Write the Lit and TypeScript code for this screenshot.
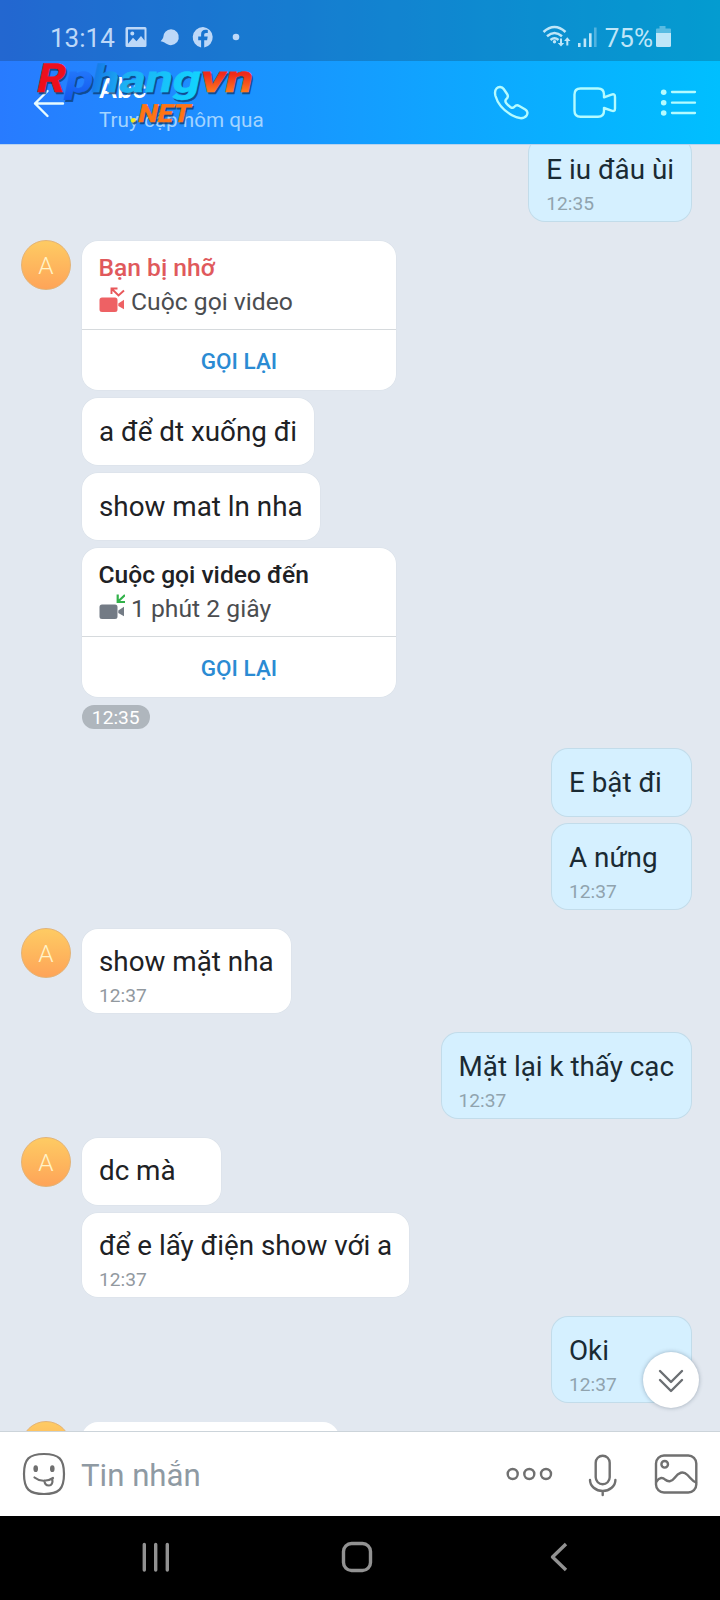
import { LitElement, html, svg, css, nothing } from "lit";
import { customElement, property } from "lit/decorators.js";

type Item =
  | { kind: "text"; text: string; time?: string }
  | { kind: "call"; missed: boolean; title: string; detail: string }
  | { kind: "stub" }
  | { kind: "stamp"; time: string };
interface Group {
  mine: boolean;
  items: Item[];
}

const GROUPS: Group[] = [
  { mine: true, items: [{ kind: "text", text: "E iu đâu ùi", time: "12:35" }] },
  {
    mine: false,
    items: [
      { kind: "call", missed: true, title: "Bạn bị nhỡ", detail: "Cuộc gọi video" },
      { kind: "text", text: "a để dt xuống đi" },
      { kind: "text", text: "show mat ln nha" },
      { kind: "call", missed: false, title: "Cuộc gọi video đến", detail: "1 phút 2 giây" },
      { kind: "stamp", time: "12:35" },
    ],
  },
  {
    mine: true,
    items: [
      { kind: "text", text: "E bật đi" },
      { kind: "text", text: "A nứng", time: "12:37" },
    ],
  },
  { mine: false, items: [{ kind: "text", text: "show mặt nha", time: "12:37" }] },
  { mine: true, items: [{ kind: "text", text: "Mặt lại k thấy cạc", time: "12:37" }] },
  {
    mine: false,
    items: [
      { kind: "text", text: "dc mà" },
      { kind: "text", text: "để e lấy điện show với a", time: "12:37" },
    ],
  },
  { mine: true, items: [{ kind: "text", text: "Oki", time: "12:37" }] },
  { mine: false, items: [{ kind: "stub" }] },
];

@customElement("status-bar")
class StatusBar extends LitElement {
  static styles = css`
    :host {
      display: flex;
      box-sizing: border-box;
      height: 61px;
      padding: 14px 48px 0 50px;
      background: rgba(20, 30, 40, 0.22);
      color: #c3e0fb;
      font: 26px/48px Roboto, sans-serif;
      justify-content: space-between;
    }
    .side { display: flex; height: 46px; }
    .left { color: #bdd8f8; }
    svg { display: block; fill: currentColor; }
    .icons { margin-left: 9px; }
    .right { color: #bfe6f8; }
    .pct { margin-left: 6.500px; margin-right: 2px; }
  `;
  render() {
    return html`
      <div class="side left">
        <span>13:14</span>
        <svg class="icons" width="120" height="46" viewBox="124 14 120 46">
          <path fill-rule="evenodd" d="M127 27h18a1.5 1.5 0 0 1 1.500 1.500v17a1.500 1.500 0 0 1-1.500 1.500h-18a1.500 1.500 0 0 1-1.500-1.500v-17a1.500 1.500 0 0 1 1.500-1.500zM128 29.500v14.200l5-6 3.500 3.600 4.500-5.300 3.500 4.500v-11zM132.300 31.400a2 2 0 1 1 0 4a2 2 0 1 1 0-4z"/>
          <path d="M171 29.300a7.900 7.900 0 1 1-3.500 15c-2-.9-4-2.500-6.800-3 .5-1.200 1.800-2.200 2.500-3.900a7.900 7.900 0 0 1 7.800-8.100z"/>
          <path d="M203 27a10.400 10.400 0 0 0-1.900 20.600v-7.400h-2.900v-3.600h2.900v-2.300c0-3 1.700-4.500 4.300-4.500 1.200 0 2 .1 2.400.2v2.900h-1.700c-1.500 0-1.900.8-1.900 1.900v1.800h3.500l-.6 3.600h-2.900v7.400a10.400 10.400 0 0 0-1.200-20.600z"/>
          <circle cx="236" cy="37" r="3.300"/>
        </svg>
      </div>
      <div class="side right">
        <svg width="56" height="46" viewBox="541 14 56 46">
          <g fill="none" stroke="currentColor" stroke-width="2.500">
            <path d="M542.500 32q11-10 22 0M546 36.200q7.500-6.500 15 0M549.500 40q4-3.500 8 0"/>
          </g>
          <circle cx="553.500" cy="41.800" r="1.700"/>
          <path d="M559 38.500h2v4.500h2.200l-3.200 3.500-3.200-3.500h2.200zM565.300 45.500V41h-2.200l3.200-3.700 3.200 3.700h-2.200v4.500z"/>
          <path d="M577 43h2.600v4H577zM582.600 38.500h2.600V47h-2.600zM588 33.300h2.600V47H588z"/>
          <path opacity=".4" d="M593 27.500h2.600V47H593z"/>
        </svg>
        <span class="pct">75%</span>
        <svg width="17" height="46" viewBox="656 14 17 46">
          <path opacity=".45" d="M660.500 26h6v2.500h4.500a1 1 0 0 1 1 1V33h-15v-3.500a1 1 0 0 1 1-1h2.500z"/>
          <path d="M657 33h15v12.500a1.500 1.500 0 0 1-1.500 1.500h-12a1.500 1.500 0 0 1-1.500-1.500z"/>
        </svg>
      </div>
    `;
  }
}

@customElement("chat-header")
class ChatHeader extends LitElement {
  static styles = css`
    :host {
      display: flex;
      box-sizing: border-box;
      height: 84px;
      padding-left: 33px;
      color: #fff;
      font-family: Roboto, sans-serif;
    }
    svg { display: block; }
    .names { display: flex; flex-direction: column; margin-left: 34px; flex: 1; padding-top: 11px; }
    .name { font-size: 27px; line-height: 34px; font-weight: 500; }
    .seen { font-size: 20.700px; line-height: 26px; color: #a3d4ff; margin-top: 1px; white-space: nowrap; }
  `;
  render() {
    return html`
      <svg width="32" height="84" viewBox="33 61 32 84" fill="none" stroke="#e8fbff" stroke-width="2.400" stroke-linecap="round" stroke-linejoin="round">
        <path d="M63 103.500H35M47.500 91L35 103.500l12.500 12.500"/>
      </svg>
      <div class="names">
        <div class="name">Abc</div>
        <div class="seen">Truy cập hôm qua</div>
      </div>
      <svg width="230" height="84" viewBox="490 61 230 84" fill="none" stroke="#b4fbff" stroke-width="2.400" stroke-linecap="round" stroke-linejoin="round">
        <path d="M496.500 88.500c2-2.200 5.500-2 7.200.5l3.400 5c1.300 2 .9 3.700-.8 5.200-1.300 1.300-1.200 2.500 0 4 1.500 1.900 2.500 2.800 4.300 4 1.600 1.100 2.500 1 3.800-.5 1.400-1.500 3-1.800 4.900-.7l6 3.500c2.300 1.500 2.700 4 1.300 6-2.800 3.700-8.100 3.300-14.600-.2-8.500-4.800-14.500-12.300-16.500-19.300-.9-3.500-.9-5.500 1-7.500z"/>
        <path d="M580.500 88.500H598q6 0 6 6v2.800l7.500-2.700q3.500-1.200 3.500 2.300v11.500q0 3.500-3.500 2.300l-7.500-2.700v2.800q0 6-6 6h-17.500q-6 0-6-6V94.500q0-6 6-6z"/>
        <path stroke-width="2.300" d="M672 92h23M672 102.700h23M672 113h23"/>
        <g fill="#b4fbff" stroke="none"><circle cx="663.700" cy="92.200" r="2.800"/><circle cx="663.700" cy="102.700" r="2.800"/><circle cx="663.700" cy="113" r="2.800"/></g>
      </svg>
    `;
  }
}

@customElement("site-mark")
class SiteMark extends LitElement {
  static styles = css`
    :host { display: block; pointer-events: none; }
    svg { display: block; overflow: visible; }
    .word { font-family: Roboto, "Liberation Sans", sans-serif; font-weight: 700; }
    .shade { opacity: 0.75; }
  `;
  private piece(text: string, x: number, y: number, w: number, size: number, fill: string, weight = 700) {
    const draw = (d: number, cls: string, paint: string) => svg`
      <text class="word ${cls}" transform="translate(${x + d} ${y + d}) skewX(-12)" font-size=${size} font-weight=${weight}
        textLength=${w} lengthAdjust="spacingAndGlyphs" fill=${paint} stroke=${paint} stroke-width="0.600">${text}</text>`;
    return svg`${draw(1.5, "shade", "#0b3a6b")}${draw(0, "", fill)}`;
  }
  render() {
    return html`<svg width="230" height="70" viewBox="30 58 230 70">
      <defs>
        <linearGradient id="p" x1="0" x2="0" y1="0" y2="1"><stop offset="0" stop-color="#2a86ff"/><stop offset="1" stop-color="#1257ee"/></linearGradient>
        <linearGradient id="h"><stop offset="0" stop-color="#1478e8"/><stop offset=".3" stop-color="#1cb0f4"/><stop offset="1" stop-color="#12d4ff"/></linearGradient>
        <linearGradient id="v" x1="0" x2="0" y1="0" y2="1"><stop offset=".4" stop-color="#f02a1a"/><stop offset=".8" stop-color="#ff7a1c"/></linearGradient>
      </defs>
      ${this.piece("p", 63, 92, 28, 38, "url(#p)")}
      ${this.piece("R", 35, 92, 28, 40, "#ee0f1c")}
      ${this.piece("hang", 89.5, 92, 109, 38, "url(#h)")}
      ${this.piece("vn", 198.5, 92, 52, 38, "url(#v)")}
      ${this.piece(".", 129, 122, 8, 26, "#f6e81e")}
      ${this.piece("NET", 137, 122, 52, 25, "#ff7414")}
    </svg>`;
  }
}

@customElement("chat-group")
class ChatGroup extends LitElement {
  static styles = css`
    :host { display: block; font-family: Roboto, sans-serif; }
    .row { display: flex; gap: 11px; padding: 0 29px 0 21px; }
    .row.mine { justify-content: flex-end; }
    .avatar {
      box-sizing: border-box;
      width: 50px; height: 50px; flex: none; margin-top: -1px;
      border-radius: 50%;
      border: 1px solid #e3b377;
      background: linear-gradient(#fecb63, #fea458);
      color: #fff3c8;
      font-size: 24.500px; line-height: 50px; text-align: center; font-weight: 300;
    }
    .stack { display: flex; flex-direction: column; align-items: flex-start; gap: 8px; }
    .bubble {
      box-sizing: border-box;
      min-height: 67px;
      min-width: 139px;
      padding: 15.500px 17px 0 17px;
      border-radius: 16px;
      background: #fff;
      box-shadow: 0 0 0 0.500px #d9e0e8;
      color: #202124;
      font-size: 27.800px; line-height: 35px; white-space: nowrap;
    }
    .bubble.timed { min-height: 84.500px; }
    .mine .bubble { background: #d5f0ff; box-shadow: 0 0 0 1px #c2dcea; color: #1a2a33; }
    .time { font-size: 19.200px; line-height: 22px; color: #92999f; margin-top: 6px; }
    .mine .time { color: #90a3ae; }
    .call {
      box-sizing: border-box;
      width: 314px; height: 149px; border-radius: 16px; background: #fff;
      box-shadow: 0 0 0 0.500px #d9e0e8;
      display: flex; flex-direction: column;
    }
    .info { box-sizing: border-box; height: 89px; flex: none; border-bottom: 1px solid #d6dadd; padding: 10px 16.500px 0; }
    .title { font-size: 24.600px; line-height: 34px; font-weight: 500; color: #202124; }
    .missed .title { color: #e0595c; }
    .detail { display: flex; font-size: 24.700px; line-height: 34px; color: #4b4d50; gap: 6.500px; }
    .again { text-align: center; font-size: 22.500px; line-height: 60px; font-weight: 500; color: #2b8bd3; padding-top: 1px; }
    .stamp { height: 24px; width: 68.500px; border-radius: 12px; background: #afb6bd; color: #fff; font-size: 19.200px; line-height: 25px; text-align: center; margin-left: -0.500px; }
    .stub { width: 257px; height: 67px; border-radius: 16px; background: #fff; }
    svg { display: block; }
  `;
  @property({ attribute: false }) group!: Group;

  private callIcon(missed: boolean) {
    const body = missed ? "#ee6164" : "#737b85";
    return html`<svg width="26" height="34" viewBox="98 285 26 34">
      <path fill=${body} d="M101 297.500h13q2.500 0 2.500 2.500v9.500q0 2.500-2.500 2.500h-13q-2.500 0-2.500-2.500v-9.500q0-2.500 2.500-2.500zM117.300 303.500l5.700-3.800v9.600l-5.700-3.300z"/>
      ${missed
        ? svg`<path fill="none" stroke="#e8575a" stroke-width="1.900" d="M110.500 294v-5.500h6M111 289l6.500 6.500 5.500-5"/>`
        : svg`<path fill="none" stroke="#32b24a" stroke-width="2.200" d="M124 288l-7.200 6.800M116.700 287.500v7.500h7.300"/>`}
    </svg>`;
  }

  private item(it: Item) {
    switch (it.kind) {
      case "text":
        return html`<div class="bubble ${it.time ? "timed" : ""}">
          <div>${it.text}</div>
          ${it.time ? html`<div class="time">${it.time}</div>` : nothing}
        </div>`;
      case "call":
        return html`<div class="call ${it.missed ? "missed" : ""}">
          <div class="info">
            <div class="title">${it.title}</div>
            <div class="detail">${this.callIcon(it.missed)}<span>${it.detail}</span></div>
          </div>
          <div class="again">GỌI LẠI</div>
        </div>`;
      case "stamp":
        return html`<div class="stamp">${it.time}</div>`;
      case "stub":
        return html`<div class="stub"></div>`;
    }
  }

  render() {
    const { mine, items } = this.group;
    const initial = items[0].kind === "stub" ? nothing : "A";
    return html`<div class="row ${mine ? "mine" : ""}">
      ${mine ? nothing : html`<div class="avatar">${initial}</div>`}
      <div class="stack">${items.map((i) => this.item(i))}</div>
    </div>`;
  }
}

@customElement("message-bar")
class MessageBar extends LitElement {
  static styles = css`
    :host {
      display: flex; box-sizing: border-box; height: 85px;
      border-top: 1px solid #ccd4da; background: #fff;
      font: 31.200px/87px Roboto, sans-serif; color: #8f9aa3;
      padding-left: 22px;
    }
    svg { display: block; }
    .hint { flex: 1; margin-left: 15px; }
  `;
  render() {
    return html`
      <svg width="44" height="84" viewBox="22 1432 44 84" fill="none" stroke="#6f6f6f" stroke-width="2.200">
        <path d="M44 1454c15 0 20 5 20 20s-5 20-20 20-20-5-20-20 5-20 20-20z"/>
        <path stroke-linecap="round" d="M34.500 1477.500c5 4 12.500 4.500 18.500.5M44.500 1480.500c0 3.500 2 5 4.500 5s4-2.500 3.300-6.500"/>
        <g fill="#6f6f6f" stroke="none"><ellipse cx="35.700" cy="1468.700" rx="2.300" ry="3.400"/><ellipse cx="52.300" cy="1468.700" rx="2.300" ry="3.400"/></g>
      </svg>
      <div class="hint">Tin nhắn</div>
      <svg width="220" height="84" viewBox="500 1432 220 84" fill="none" stroke="#707070" stroke-width="2.400" stroke-linecap="round">
        <circle cx="512.700" cy="1474" r="5"/><circle cx="529.300" cy="1474" r="5"/><circle cx="546" cy="1474" r="5"/>
        <rect x="595.700" y="1455.700" width="14" height="28.600" rx="7"/>
        <path d="M590 1480a12.700 11 0 0 0 25.400 0M602.700 1491v4"/>
        <rect x="656" y="1455.500" width="40.300" height="37" rx="8"/>
        <circle cx="664.700" cy="1464.300" r="3.300"/>
        <path d="M656.500 1481.500c3-4.500 6.500-4 8.500-2 3 2.500 6.500 2.500 9.500-1.500 4-5.500 8.500-7.500 13-3 3.500 3.500 4 5.500 8.500 7.500"/>
      </svg>
    `;
  }
}

@customElement("nav-bar")
class NavBar extends LitElement {
  static styles = css`
    :host { display: block; height: 84px; background: #000; }
    svg { display: block; }
  `;
  render() {
    return html`<svg width="720" height="84" viewBox="0 1516 720 84" fill="none" stroke="#929292" stroke-width="3.400" stroke-linecap="round" stroke-linejoin="round">
      <path d="M144.300 1544.500v25.500M155.700 1544.500v25.500M167.300 1544.500v25.500"/>
      <rect x="343.500" y="1543.500" width="27" height="27" rx="8"/>
      <path stroke-linecap="butt" d="M566 1544l-13.500 13 13.500 13"/>
    </svg>`;
  }
}

@customElement("app-root")
class AppRoot extends LitElement {
  static styles = css`
    :host { display: block; width: 720px; height: 1600px; overflow: hidden; }
    .phone { display: flex; flex-direction: column; height: 1600px; position: relative; }
    .top { background: linear-gradient(90deg, #287bff, #00bfff); border-bottom: 1px solid #b9d3ee; height: 144px; overflow: hidden; flex: none; }
    .mark { position: absolute; left: 30px; top: 58px; }
    .chat { height: 1286px; flex: none; overflow: hidden; position: relative; background: #e2e8f0; }
    .list { display: flex; flex-direction: column; gap: 20px; margin-top: -8.500px; }
    .jump {
      position: absolute; right: 21px; bottom: 23px; width: 56px; height: 56px;
      border-radius: 50%; background: #fff; box-shadow: 0 0 4px rgba(70, 90, 110, 0.45);
    }
    .jump svg { display: block; }
  `;
  render() {
    return html`<div class="phone">
      <div class="top">
        <status-bar></status-bar>
        <chat-header></chat-header>
      </div>
      <div class="chat">
        <div class="list">${GROUPS.map((g) => html`<chat-group .group=${g}></chat-group>`)}</div>
        <div class="jump">
          <svg width="56" height="56" viewBox="643 1352 56 56" fill="none" stroke="#6b6f73" stroke-width="2.400" stroke-linecap="round" stroke-linejoin="round">
            <path d="M660 1371l11 11 11-11M660 1380l11 11 11-11"/>
          </svg>
        </div>
      </div>
      <message-bar></message-bar>
      <nav-bar></nav-bar>
      <site-mark class="mark"></site-mark>
    </div>`;
  }
}
